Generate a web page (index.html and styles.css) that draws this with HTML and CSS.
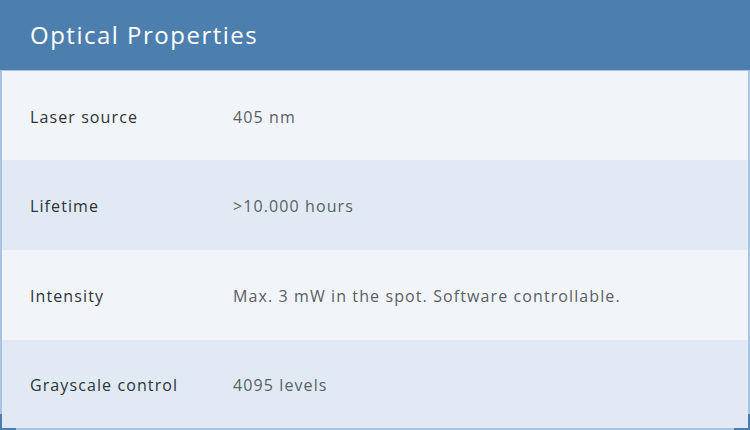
FILE: index.html
```html
<!DOCTYPE html>
<html>
<head>
<meta charset="utf-8">
<link rel="stylesheet" href="styles.css">
</head>
<body>
<div class="panel">
  <div class="header">Optical Properties</div>
  <div class="rows">
    <div class="row odd"><div class="label">Laser source</div><div class="value">405 nm</div></div>
    <div class="row even"><div class="label">Lifetime</div><div class="value">&gt;10.000 hours</div></div>
    <div class="row odd"><div class="label">Intensity</div><div class="value">Max. 3 mW in the spot. Software controllable.</div></div>
    <div class="row even"><div class="label">Grayscale control</div><div class="value">4095 levels</div></div>
  </div>
  <span class="corner bl"></span>
  <span class="corner br"></span>
</div>
</body>
</html>
```
FILE: styles.css
```css
html, body { margin: 0; padding: 0; }
body { width: 750px; height: 430px; overflow: hidden; font-family: "Open Sans", "Noto Sans", sans-serif; }
.panel { position: relative; width: 750px; height: 430px; box-sizing: border-box; }
.header { height: 70px; background: #4d7fae; color: #fff; font-size: 24px; letter-spacing: 1.5px; padding-left: 30px; display: flex; align-items: center; box-sizing: border-box; padding-bottom: 2px; }
.rows { border-top: 1px solid #a9c4e0; border-left: 2px solid #a9c4e0; border-right: 2px solid #a9c4e0; border-bottom: 2px solid #a9c4e0; height: 360px; box-sizing: border-box; display: grid; grid-template-rows: 89px 90px 90px 1fr; }
.row { display: grid; grid-template-columns: 203px 1fr; align-items: center; padding-left: 28px; font-size: 16px; letter-spacing: 1.1px; padding-top: 2px; }
.odd { background: #f1f5fa; }
.even { background: #e1eaf4; }
.label { color: #2e3338; }
.value { color: #5a5f66; }
.corner { position: absolute; bottom: 0; width: 16px; height: 16px; box-sizing: border-box; }
.bl { left: 0; border-left: 2px solid #4a7db0; border-bottom: 2px solid #4a7db0; }
.br { right: 0; border-right: 2px solid #4a7db0; border-bottom: 2px solid #4a7db0; }
```
